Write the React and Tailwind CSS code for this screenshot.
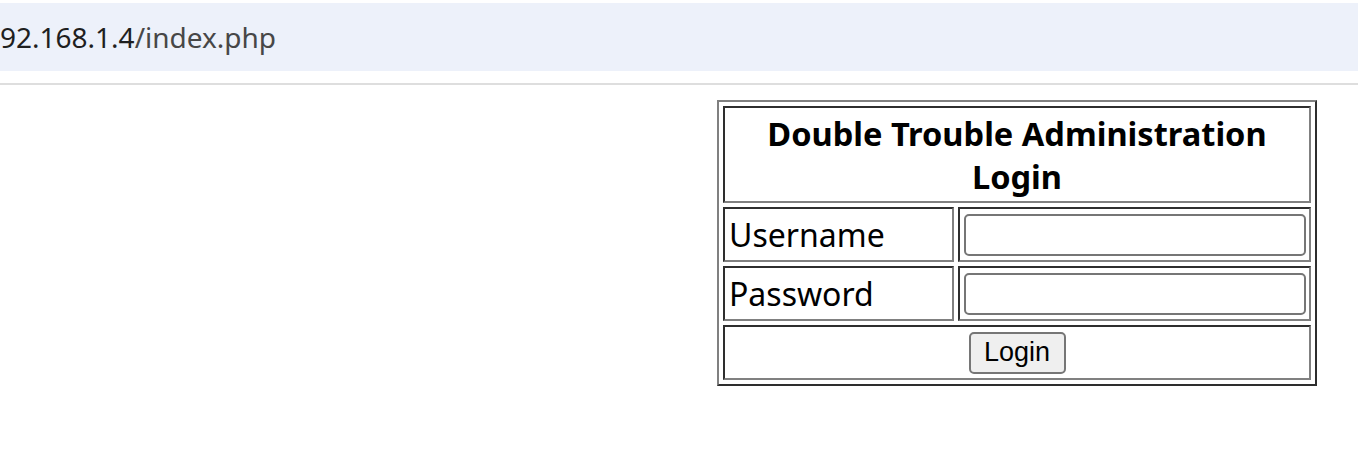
import React from "react";

const dark = "border-t-[#2e2e2e] border-l-[#2e2e2e] border-b-[#808080] border-r-[#808080]";

const Cell = ({ className = "", children, ...rest }) => (
  <td className={`border-2 border-solid ${dark} ${className}`} {...rest}>
    {children}
  </td>
);

export default function App() {
  return (
    <div className="min-h-[454px] bg-white text-black" style={{ fontFamily: '"Noto Sans", "Open Sans", sans-serif' }}>
      {/* address bar */}
      <div className="pt-[3px]">
        <div className="h-[68px] bg-[#edf1fa] flex items-center overflow-hidden">
          <span className="text-[28px] leading-none whitespace-nowrap">
            <span className="text-[#1f1f1f]">92.168.1.4</span>
            <span className="text-[#474747]">/index.php</span>
          </span>
        </div>
        <div className="h-[12px]" />
        <div className="h-[2px] bg-[#dedede]" />
      </div>

      <table className="mt-[15px] ml-[717px] w-[600px] border-separate border-spacing-[4px] border-2 border-solid border-t-[#808080] border-l-[#808080] border-b-[#2e2e2e] border-r-[#2e2e2e]">
        <tbody>
          <tr>
            <Cell colSpan={2} className="h-[97px] px-[6px] text-center align-middle">
              <span className="text-[32.6px] font-bold leading-[43px]">Double Trouble Administration Login</span>
            </Cell>
          </tr>
          <tr>
            <Cell className="w-[231px] h-[55px] px-[4px] align-middle text-[32px] leading-[40px]">Username</Cell>
            <Cell className="h-[55px] pl-[4px] pr-[3px] align-middle">
              <input type="text" className="block w-full h-[42px] border-2 border-solid border-[#767676] rounded-[5px] bg-white outline-none" />
            </Cell>
          </tr>
          <tr>
            <Cell className="h-[55px] px-[4px] align-middle text-[32px] leading-[40px]">Password</Cell>
            <Cell className="h-[55px] pl-[4px] pr-[3px] align-middle">
              <input type="password" className="block w-full h-[42px] border-2 border-solid border-[#767676] rounded-[5px] bg-white outline-none" />
            </Cell>
          </tr>
          <tr>
            <Cell colSpan={2} className="h-[55px] text-center align-middle">
              <button
                type="button"
                className="inline-flex items-center justify-center w-[97px] h-[42px] border-2 border-solid border-[#767676] rounded-[5px] bg-[#efefef] text-[27px] text-black align-middle"
                style={{ fontFamily: '"Liberation Sans", Arial, sans-serif' }}
              >
                Login
              </button>
            </Cell>
          </tr>
        </tbody>
      </table>
    </div>
  );
}
